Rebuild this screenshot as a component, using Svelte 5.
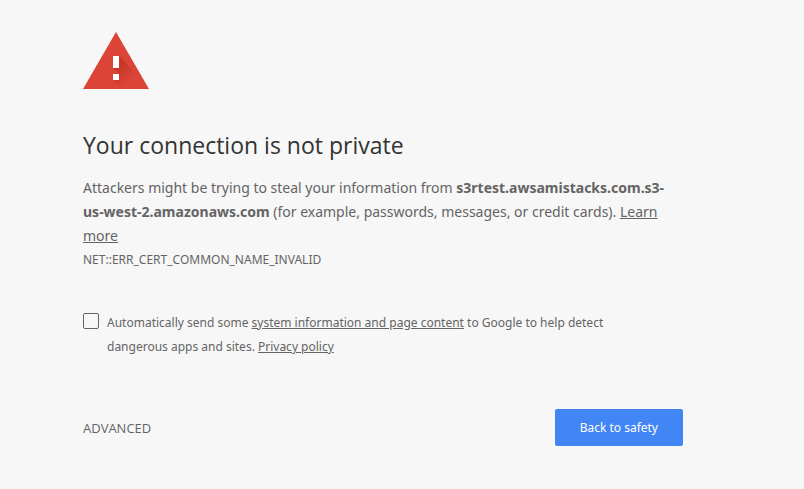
<script>
  let report = $state(false);
</script>

<main>
  <svg class="icon" viewBox="0 0 66 57" role="img" aria-label="Warning">
    <defs>
      <linearGradient id="shade" gradientUnits="userSpaceOnUse" x1="31" y1="35" x2="46" y2="50">
        <stop offset="0" stop-color="#a52714" stop-opacity="0.5" />
        <stop offset="1" stop-color="#a52714" stop-opacity="0" />
      </linearGradient>
    </defs>
    <path fill="#db4437" d="M33 0 66 57H0Z" />
    <path fill="url(#shade)" d="M36 24 58 46 64 57H39L30 48 36 42 30 36Z" />
    <path fill="#fff" d="M30 24h6v12h-6zM30 42h6v6h-6z" />
  </svg>
  <h1>Your connection is not private</h1>
  <p class="lead">
    Attackers might be trying to steal your information from
    <strong>s3rtest.awsamistacks.com.s3-<wbr />us-west-2.amazonaws.com</strong>
    (for example, passwords, messages, or credit cards).
    <a href="#learn">Learn more</a>
  </p>
  <div class="code">NET::ERR_CERT_COMMON_NAME_INVALID</div>
  <div class="optin">
    <input id="report" type="checkbox" bind:checked={report} />
    <label for="report">
      Automatically send some <a href="#info">system information and page content</a> to Google to help detect dangerous apps and sites. <a href="#privacy">Privacy policy</a>
    </label>
  </div>
  <div class="actions">
    <button class="advanced">ADVANCED</button>
    <button class="primary">Back to safety</button>
  </div>
</main>

<style>
  :global(body) {
    background: #f7f7f7;
  }
  main {
    max-width: 600px;
    padding: 32px 40px 40px 83px;
    color: #646464;
    font-family: "Noto Sans", sans-serif;
    font-size: 12px;
    line-height: 24px;
  }
  .icon {
    display: block;
    width: 66px;
    height: 57px;
  }
  h1 {
    margin: 40px 0 14px;
    color: #333;
    font-family: "Open Sans", sans-serif;
    font-size: 23px;
    font-weight: 400;
    line-height: 33px;
  }
  .lead {
    margin: 0;
    font-size: 14px;
  }
  a {
    color: inherit;
    text-decoration: underline;
  }
  .optin {
    display: flex;
    align-items: flex-start;
    gap: 8px;
    margin-top: 39px;
    padding-right: 24px;
  }
  input {
    appearance: none;
    box-sizing: border-box;
    flex: none;
    width: 16px;
    height: 16px;
    margin: 2px 0 0;
    border: 1px solid #646464;
    border-radius: 2px;
    background: transparent;
  }
  input:checked {
    background: #646464;
  }
  .actions {
    display: flex;
    align-items: center;
    justify-content: space-between;
    margin-top: 50px;
  }
  button {
    border: 0;
    font: inherit;
    cursor: pointer;
  }
  .advanced {
    padding: 0;
    background: none;
    color: inherit;
    font-family: "Open Sans", sans-serif;
    font-size: 13px;
  }
  .primary {
    height: 37px;
    padding: 0 25px;
    border-radius: 2px;
    background: #4285f4;
    color: #fff;
  }
</style>
